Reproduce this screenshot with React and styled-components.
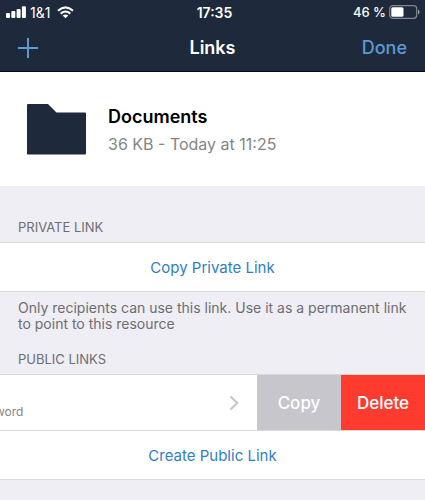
import React from "react";
import styled, { createGlobalStyle } from "styled-components";

const GlobalStyle = createGlobalStyle`
  * { box-sizing: border-box; }
  body {
    margin: 0;
    background: #efeef4;
    font-family: Inter, "Liberation Sans", sans-serif;
    overflow-x: hidden;
  }
  button {
    font: inherit;
    border: 0;
    padding: 0;
    margin: 0;
    background: none;
    cursor: pointer;
  }
  svg { display: block; flex: none; }
`;

const Header = styled.header`
  background: #1e293b;
  border-bottom: 1px solid #050a1c;
  color: #fff;
`;

const Bar = styled.div`
  display: grid;
  grid-template-columns: 1fr auto 1fr;
  align-items: center;
`;

const StatusBar = styled(Bar)`
  height: 24px;
  padding: 0 5px 0 6px;
  font-size: 13px;
  font-weight: 500;
`;

const NavBar = styled(Bar)`
  height: 47px;
  padding: 0 18px;
`;

const Side = styled.div`
  display: flex;
  align-items: center;
  gap: ${(p) => p.$gap || 0}px;
  justify-content: ${(p) => (p.$end ? "flex-end" : "flex-start")};
`;

const Carrier = styled.span`
  margin-right: 3px;
  font-size: 14px;
  font-weight: 400;
`;

const Time = styled.time`
  padding-left: 3px;
  font-size: 14px;
  font-weight: 600;
`;

const Title = styled.h1`
  margin: 0;
  font-size: 18px;
  line-height: 24px;
  font-weight: 600;
`;

const NavButton = styled.button`
  color: #5b9bd3;
  && {
    font-size: 18px;
    line-height: 24px;
    font-weight: 500;
  }
`;

const FileInfo = styled.section`
  display: flex;
  align-items: center;
  gap: 22px;
  height: 114px;
  padding: 0 26px;
  background: #fff;
`;

const FileText = styled.div`
  padding-top: 4px;
`;

const FileName = styled.h2`
  margin: 0;
  font-size: 18px;
  line-height: 26px;
  font-weight: 600;
  color: #000;
`;

const FileMeta = styled.p`
  margin: 0;
  font-size: 16px;
  line-height: 28px;
  color: #858585;
`;

const SectionTitle = styled.h3`
  margin: 0;
  padding: ${(p) => p.$top}px 18px 7px;
  font-size: 13px;
  line-height: 16px;
  font-weight: 400;
  color: #6d6d72;
`;

const Group = styled.div`
  border-top: 1px solid #d9d9dc;
  background: #fff;
`;

const ActionButton = styled.button`
  display: block;
  width: 100%;
  height: 49px;
  border-bottom: 1px solid #d9d9dc;
  color: #2f7fc4;
  && { font-size: 15px; }
`;

const Note = styled.p`
  margin: 0;
  padding: 8px 18px 0;
  font-size: 14px;
  line-height: 16px;
  color: #6d6d72;
`;

const LinkRow = styled.div`
  display: flex;
  height: 56px;
  border-bottom: 1px solid #d9d9dc;
`;

const LinkContent = styled.div`
  display: flex;
  flex: 1;
  align-items: center;
  justify-content: space-between;
  min-width: 0;
  padding-right: 18px;
  overflow: hidden;
`;

const LinkDetail = styled.span`
  align-self: flex-end;
  margin-left: -5px;
  padding-bottom: 10px;
  font-size: 12px;
  line-height: 16px;
  color: #858585;
`;

const SwipeButton = styled.button`
  width: 84px;
  background: ${(p) => p.$color};
  color: #fff;
  && {
    font-size: 17px;
    font-weight: 500;
  }
`;

function SignalIcon() {
  return (
    <svg width="20" height="13" viewBox="0 0 20 13" fill="#fff" aria-hidden="true">
      <rect x="0" y="7" width="4" height="5" rx="1" />
      <rect x="5.3" y="5" width="4" height="7" rx="1" />
      <rect x="10.6" y="3" width="4" height="9" rx="1" />
      <rect x="15.9" y="0.3" width="4" height="11.7" rx="1" />
    </svg>
  );
}

function WifiIcon() {
  return (
    <svg width="17" height="13" viewBox="0 0 17 13" fill="none" stroke="#fff" strokeWidth="2.1" aria-hidden="true">
      <path d="M1 4.8Q8.5 -2 16 4.8" />
      <path d="M3.7 7.6Q8.5 3.4 13.3 7.6" />
      <path d="M8.5 12.3L5.7 9.6Q8.5 7.5 11.3 9.6Z" fill="#fff" stroke="none" />
    </svg>
  );
}

function BatteryIcon() {
  return (
    <svg width="31" height="14" viewBox="0 0 31 14" aria-hidden="true">
      <rect x="0.7" y="0.7" width="27" height="12.6" rx="3" fill="none" stroke="#7f8792" strokeWidth="1.2" />
      <rect x="2.3" y="2.3" width="12.2" height="9.4" rx="1.5" fill="#fff" />
      <path d="M29 4.5Q30.7 5.3 30.7 7T29 9.5Z" fill="#8f969f" />
    </svg>
  );
}

function PlusIcon() {
  return (
    <svg width="20" height="20" viewBox="0 0 20 20" stroke="#5b9bd3" strokeWidth="2" aria-hidden="true">
      <path d="M10 0V20M0 10H20" />
    </svg>
  );
}

function FolderIcon() {
  return (
    <svg width="60" height="52" viewBox="0 0 60 52" aria-hidden="true">
      <path d="M2 1H22L30.5 9.5H59Q60 9.5 60 10.5V50.5Q60 51.5 59 51.5H2Q1 51.5 1 50.5V2Q1 1 2 1Z" fill="#1e293b" />
    </svg>
  );
}

function ChevronIcon() {
  return (
    <svg width="10" height="16" viewBox="0 0 10 16" fill="none" stroke="#c4c4c9" strokeWidth="2" aria-hidden="true">
      <path d="M1.5 1.5L8.3 8L1.5 14.5" />
    </svg>
  );
}

export default function App() {
  return (
    <>
      <GlobalStyle />
      <Header>
        <StatusBar>
          <Side $gap={4}>
            <SignalIcon />
            <Carrier>1&amp;1</Carrier>
            <WifiIcon />
          </Side>
          <Time>17:35</Time>
          <Side $gap={3} $end>
            <span>46 %</span>
            <BatteryIcon />
          </Side>
        </StatusBar>
        <NavBar>
          <Side>
            <NavButton aria-label="Add link"><PlusIcon /></NavButton>
          </Side>
          <Title>Links</Title>
          <Side $end>
            <NavButton>Done</NavButton>
          </Side>
        </NavBar>
      </Header>
      <main>
        <FileInfo>
          <FolderIcon />
          <FileText>
            <FileName>Documents</FileName>
            <FileMeta>36 KB - Today at 11:25</FileMeta>
          </FileText>
        </FileInfo>
        <section>
          <SectionTitle $top={33}>PRIVATE LINK</SectionTitle>
          <Group>
            <ActionButton>Copy Private Link</ActionButton>
          </Group>
          <Note>Only recipients can use this link. Use it as a permanent link to point to this resource</Note>
        </section>
        <section>
          <SectionTitle $top={19}>PUBLIC LINKS</SectionTitle>
          <Group>
            <LinkRow>
              <LinkContent>
                <LinkDetail>word</LinkDetail>
                <ChevronIcon />
              </LinkContent>
              <SwipeButton $color="#c7c6cc">Copy</SwipeButton>
              <SwipeButton $color="#ff3b30">Delete</SwipeButton>
            </LinkRow>
            <ActionButton>Create Public Link</ActionButton>
          </Group>
        </section>
      </main>
    </>
  );
}
